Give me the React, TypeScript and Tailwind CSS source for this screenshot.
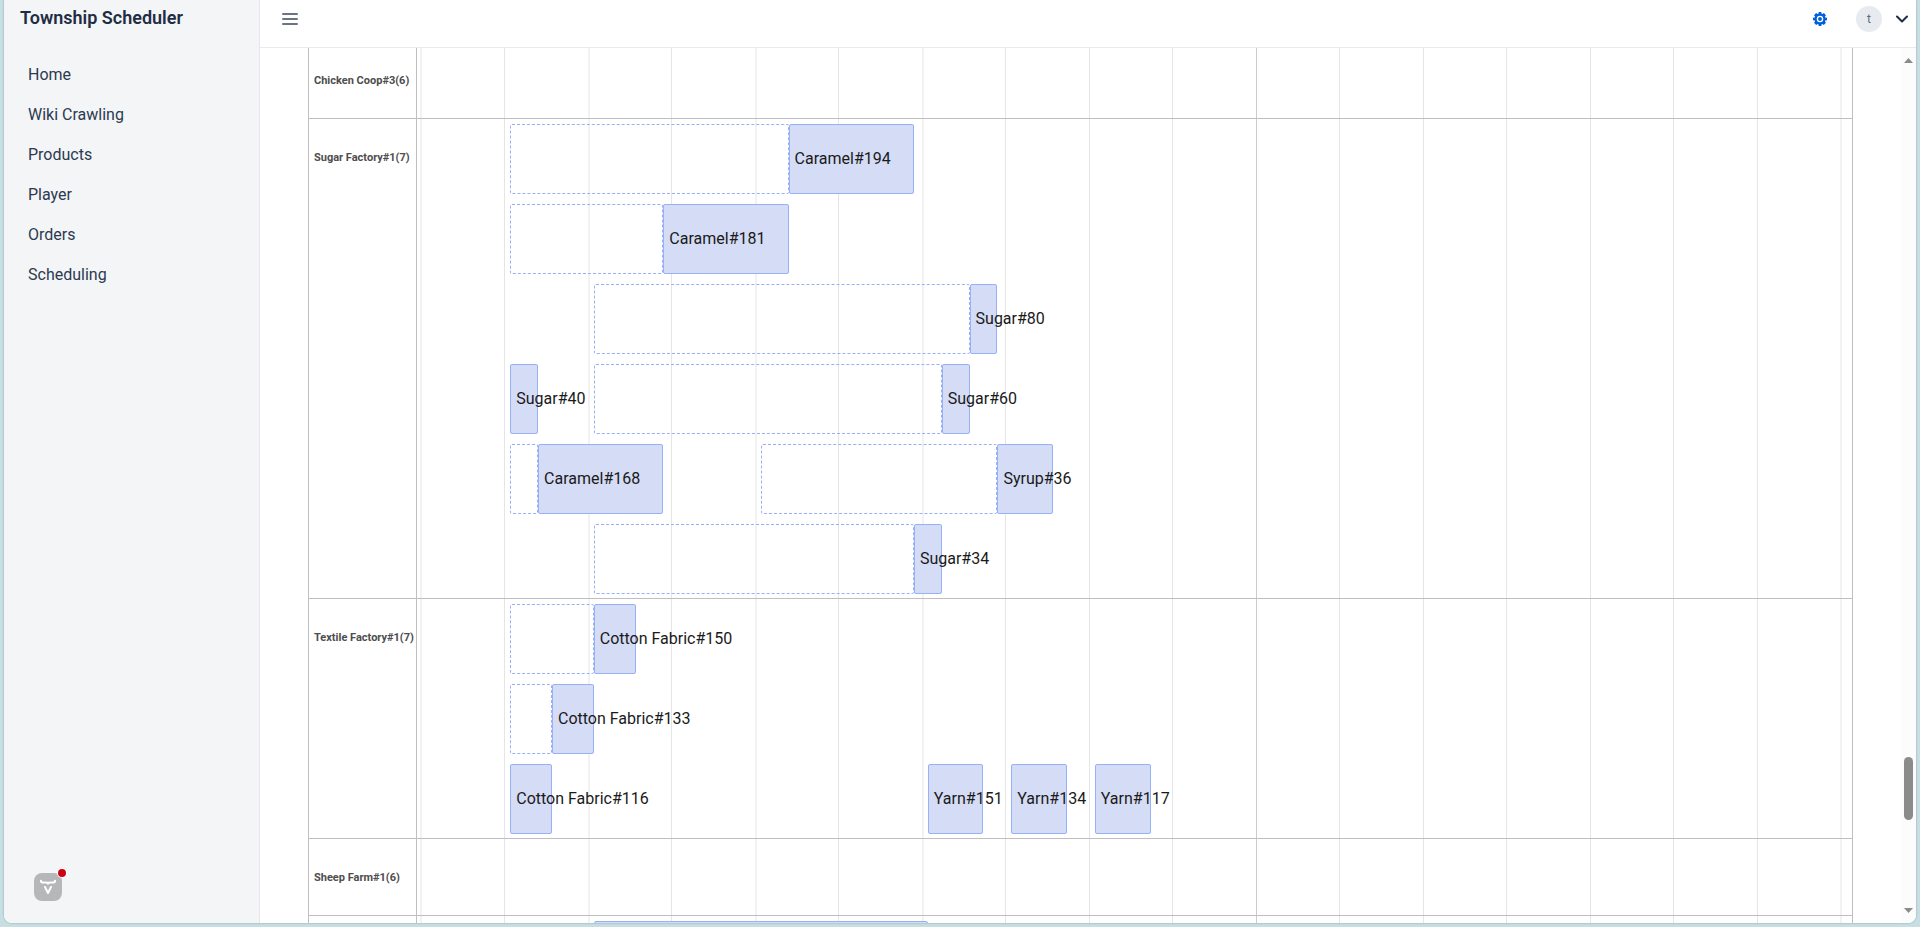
const NAV = ["Home", "Wiki Crawling", "Products", "Player", "Orders", "Scheduling"];

const SPAN = 1031; // minutes covered by the visible window
const BASE = 67; // minutes between the left edge and the first slot
const OFFSET = 2.5; // minutes between the left edge and the first hour line

const pct = (minutes: number) => `${(minutes / SPAN) * 100}%`;

type Bar = { name: string; start: number; end: number; wait?: number };
type Group = { label: string; lanes: Bar[][] };

const GROUPS: Group[] = [
  { label: "Chicken Coop#3(6)", lanes: [] },
  {
    label: "Sugar Factory#1(7)",
    lanes: [
      [{ name: "Caramel#194", start: 200, end: 290, wait: 0 }],
      [{ name: "Caramel#181", start: 110, end: 200, wait: 0 }],
      [{ name: "Sugar#80", start: 330, end: 350, wait: 60 }],
      [
        { name: "Sugar#40", start: 0, end: 20 },
        { name: "Sugar#60", start: 310, end: 330, wait: 60 },
      ],
      [
        { name: "Caramel#168", start: 20, end: 110, wait: 0 },
        { name: "Syrup#36", start: 350, end: 390, wait: 180 },
      ],
      [{ name: "Sugar#34", start: 290, end: 310, wait: 60 }],
    ],
  },
  {
    label: "Textile Factory#1(7)",
    lanes: [
      [{ name: "Cotton Fabric#150", start: 60, end: 90, wait: 0 }],
      [{ name: "Cotton Fabric#133", start: 30, end: 60, wait: 0 }],
      [
        { name: "Cotton Fabric#116", start: 0, end: 30 },
        { name: "Yarn#151", start: 300, end: 340 },
        { name: "Yarn#134", start: 360, end: 400 },
        { name: "Yarn#117", start: 420, end: 460 },
      ],
    ],
  },
  { label: "Sheep Farm#1(6)", lanes: [] },
  { label: "", lanes: [[{ name: "", start: 60, end: 300 }]] },
];

const HOURS = Array.from({ length: 18 }, (_, i) => i);

function hourClass(hour: number) {
  if (hour === 10) return "w-px bg-[#cccccc]";
  if (hour < 8 && hour % 2 === 0) return "w-0.5 bg-[#f2f2f2]";
  if (hour === 17) return "w-0.5 bg-[#f2f2f2]";
  return "w-px bg-[#e5e5e5]";
}

function BarView({ bar }: { bar: Bar }) {
  return (
    <>
      {bar.wait !== undefined && (
        <div
          className="absolute inset-y-0 rounded-xs border border-dashed border-[#97b0f8]"
          style={{ left: pct(BASE + bar.wait), width: pct(bar.start - bar.wait) }}
        />
      )}
      <div
        className="absolute inset-y-0 flex items-center rounded-xs border border-[#97b0f8] bg-[#d5dcf6] pl-[5px] whitespace-nowrap"
        style={{ left: pct(BASE + bar.start), width: pct(bar.end - bar.start) }}
      >
        {bar.name}
      </div>
    </>
  );
}

function GroupRow({ group }: { group: Group }) {
  return (
    <section className="flex min-h-[77px] border-b border-[#bfbfbf]">
      <h2 className="flex h-[76px] w-[108px] shrink-0 items-center pt-0.5 pl-[5px] text-[11px] font-bold whitespace-nowrap text-[#4d4d4d]">
        {group.label}
      </h2>
      <div className="flex min-w-0 grow flex-col gap-2.5 pt-[5px] pb-1 text-[#1a1a1a]">
        {group.lanes.map((lane, i) => (
          <div key={i} className="relative h-[70px]">
            {lane.map((bar) => (
              <BarView key={bar.name} bar={bar} />
            ))}
          </div>
        ))}
      </div>
    </section>
  );
}

function Timeline() {
  return (
    <div className="relative -mt-1.5 mr-12 ml-12 grow border-x border-[#bfbfbf]">
      <div className="absolute inset-y-0 right-0 left-[107px] border-l border-[#bfbfbf]">
        {HOURS.map((h) => (
          <div
            key={h}
            className={`absolute inset-y-0 ${hourClass(h)}`}
            style={{ left: pct(OFFSET + h * 60) }}
          />
        ))}
      </div>
      <div className="relative">
        {GROUPS.map((g) => (
          <GroupRow key={g.label} group={g} />
        ))}
      </div>
    </div>
  );
}

function GearIcon() {
  return (
    <svg viewBox="0 0 16 16" className="size-3.5" fill="#005fdb" aria-hidden="true">
      <path
        fillRule="evenodd"
        d="M16 9.500v-3l-2-.3a6 6 0 0 0-.4-.9l1.200-1.700-2.400-2.400-1.700 1.200a6 6 0 0 0-.9-.4L9.500 0h-3l-.3 2a6 6 0 0 0-.9.4L3.600 1.200 1.200 3.600l1.200 1.700a6 6 0 0 0-.4.9L0 6.500v3l2 .3a6 6 0 0 0 .4.9l-1.200 1.700 2.400 2.400 1.700-1.200a6 6 0 0 0 .9.4l.3 2h3l.3-2a6 6 0 0 0 .9-.4l1.700 1.200 2.400-2.400-1.200-1.700a6 6 0 0 0 .4-.9zM8 11.700a3.700 3.700 0 1 1 0-7.400 3.700 3.700 0 0 1 0 7.400zm0-1.500a2.200 2.200 0 1 0 0-4.400 2.200 2.200 0 0 0 0 4.400z"
      />
    </svg>
  );
}

function DevToolsButton() {
  return (
    <button type="button" aria-label="Development tools" className="relative block size-7 rounded-lg bg-[#b6b7b9]">
      <svg viewBox="0 0 28 28" className="size-7" fill="none" stroke="#ffffff" aria-hidden="true">
        <path
          d="M7 7.800c0 1.200.5 1.700 1.500 1.700h3.700c1.200 0 1.800.4 1.800 1.200 0-.8.6-1.200 1.800-1.200h3.700c1 0 1.500-.5 1.500-1.700"
          strokeWidth="2"
          strokeLinecap="round"
          strokeLinejoin="round"
        />
        <path d="M11 14l3 6 3-6" strokeWidth="2" strokeLinecap="round" strokeLinejoin="round" />
      </svg>
      <span className="absolute -top-1 -right-1 size-2 rounded-full bg-[#ce0014] ring-1 ring-white" />
    </button>
  );
}

export default function App() {
  return (
    <div className="h-screen bg-[#c7dfe2] px-1 pb-1 font-[Roboto,sans-serif] text-base">
      <div className="flex h-full overflow-hidden rounded-b-lg bg-white shadow-[0_0_2px_#7d9a9f]">
        <aside className="flex w-64 shrink-0 flex-col border-r border-[#e6e8ec] bg-[#f3f5f7] text-[#2c3a50]">
          <h1 className="pt-1.5 pl-4 text-lg leading-6 font-semibold text-[#1f2d44]">Township Scheduler</h1>
          <nav className="mt-[25px] flex flex-col pl-6">
            {NAV.map((item) => (
              <a key={item} href="#" className="flex h-10 items-center">
                {item}
              </a>
            ))}
          </nav>
          <div className="mt-auto pb-[22px] pl-[30px]">
            <DevToolsButton />
          </div>
        </aside>
        <main className="flex min-w-0 grow flex-col">
          <header className="flex h-12 shrink-0 items-center justify-between border-b border-[#e8eaed] pr-2 pb-[9px] pl-[22px]">
            <button type="button" aria-label="Toggle menu" className="flex w-4 flex-col gap-[3px]">
              <span className="h-0.5 rounded-full bg-[#6b7482]" />
              <span className="h-0.5 rounded-full bg-[#6b7482]" />
              <span className="h-0.5 rounded-full bg-[#6b7482]" />
            </button>
            <div className="flex items-center">
              <button type="button" aria-label="Settings">
                <GearIcon />
              </button>
              <button type="button" aria-label="Account" className="ml-[29px] flex items-center gap-3.5">
                <span className="flex size-[26px] items-center justify-center rounded-full bg-[#e7eaef] text-xs text-[#5e6a7b]">
                  t
                </span>
                <svg viewBox="0 0 12 8" className="h-2 w-3" fill="none" stroke="#1f2d44" strokeWidth="2" aria-hidden="true">
                  <path d="M1 1.500l5 5 5-5" strokeLinecap="round" strokeLinejoin="round" />
                </svg>
              </button>
            </div>
          </header>
          <div className="flex min-h-0 grow overflow-hidden">
            <Timeline />
            <div className="flex w-[15px] shrink-0 flex-col items-center bg-[#fcfcfc] pt-2.5 pb-2.5">
              <svg viewBox="0 0 9 5" className="h-[5px] w-[9px]" fill="#8b8b8b" aria-hidden="true">
                <path d="M0 5L4.500 0 9 5z" />
              </svg>
              <div className="grow-[694]" />
              <div className="h-[63px] w-[9px] rounded-full bg-[#8b8b8b]" />
              <div className="grow-[88]" />
              <svg viewBox="0 0 9 5" className="h-[5px] w-[9px]" fill="#8b8b8b" aria-hidden="true">
                <path d="M0 0L4.500 5 9 0z" />
              </svg>
            </div>
          </div>
        </main>
      </div>
    </div>
  );
}
